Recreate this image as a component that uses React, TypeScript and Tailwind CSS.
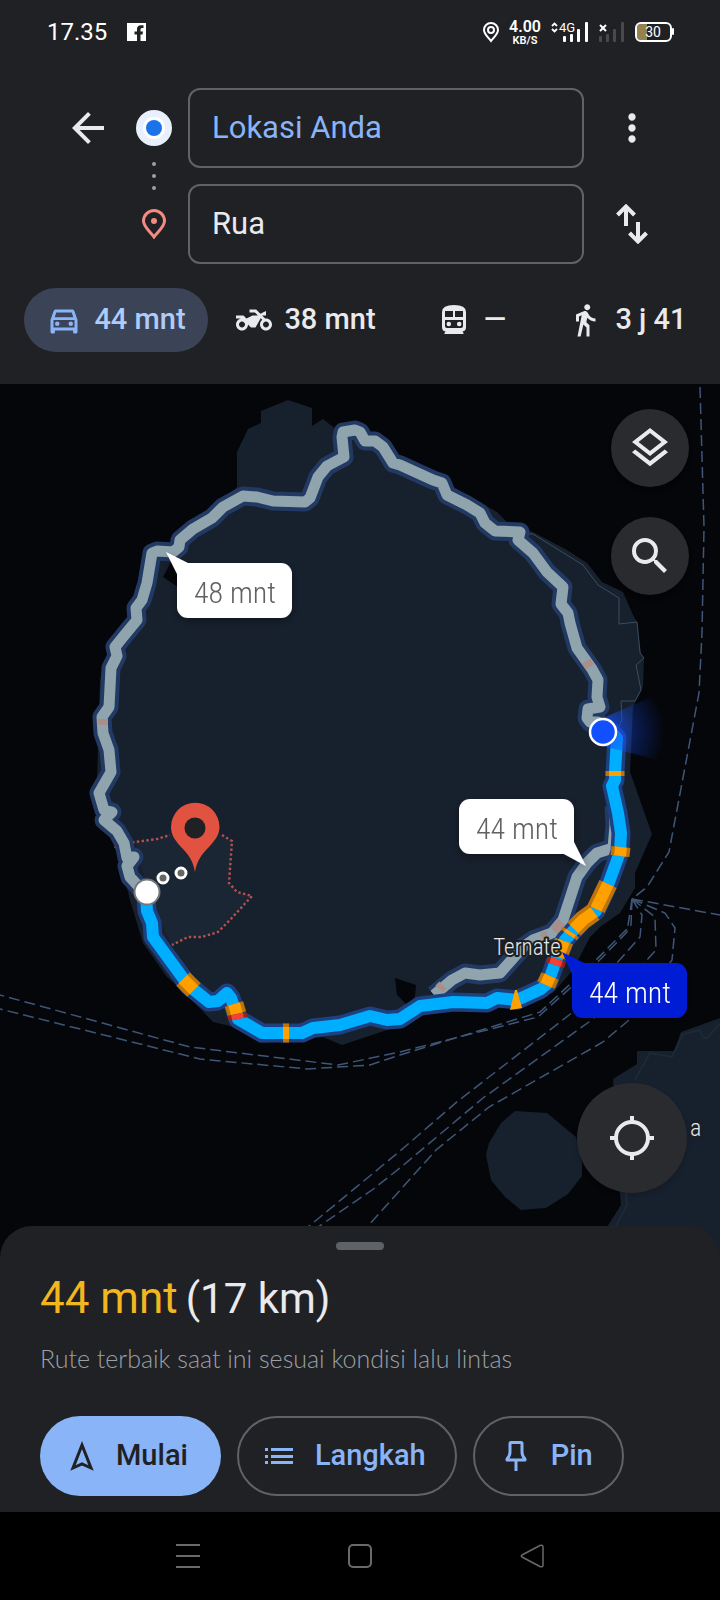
import type { ReactNode } from 'react';
import {
  MdArrowBack,
  MdDirectionsWalk,
  MdMoreVert,
  MdOutlineDirectionsCar,
  MdOutlineLayers,
  MdSearch,
  MdTwoWheeler,
} from 'react-icons/md';

const MAIN_ROUTE =
  'M610 731 L617 738 L615 772 L615 780 L612 786 L618 813 L621 833 L620 852 L608 885 L596 911 L583 920 L565 940 L555 963 L548 983 L541 989 L517 1000 L497 998 L487 1003 L453 1002 L420 1006 L400 1019 L387 1020 L370 1016 L340 1025 L313 1028 L302 1033 L262 1033 L238 1019 L231 998 L227 993 L218 1001 L209 1002 L188 985 L153 937 L152 923 L147 911 L146 896';

const NORTH_ROUTE =
  'M598 722 L590 722 L587 718 L588 709 L600 707 L597 697 L598 680 L592 669 L577 648 L570 623 L568 613 L561 604 L563 587 L547 572 L533 553 L518 540 L520 532 L495 531 L485 523 L480 513 L467 505 L447 495 L442 483 L433 480 L400 465 L393 463 L383 447 L375 441 L365 441 L360 432 L355 430 L343 432 L342 437 L344 457 L327 466 L318 477 L310 498 L305 502 L273 501 L257 497 L243 496 L223 507 L212 518 L193 529 L180 540 L179 547 L173 552 L157 551 L152 553 L147 583 L142 600 L136 608 L137 620 L123 637 L115 647 L117 656 L111 668 L109 707 L102 717 L103 733 L109 750 L111 772 L99 793 L104 810 L112 812 L104 820 L117 831 L124 843 L127 858 L134 857 L127 866 L130 877 L140 888';

const INNER_ROUTE =
  'M614 806 L615 825 L613 848 L597 853 L587 863 L577 877 L563 920 L552 933 L533 940 L523 947 L500 973 L480 975 L465 973 L452 980 L434 995';

const FERRIES = [
  'M700 387 L704 527 L702 633 L699 693 L669 852 L647 887 L632 899',
  'M632 899 L720 915',
  'M632 899 L665 913 L675 928 L672 960 L629 1020 L603 1042 L489 1107 L436 1150 L368 1226',
  'M632 899 L655 917 L656 950 L593 1019 L483 1098 L400 1168 L372 1190 L318 1227',
  'M632 899 L642 915 L640 937 L573 1012 L458 1101 L400 1151 L308 1227',
  'M632 899 L631 925 L593 963 L540 1012 L400 1055 L370 1065 L307 1069 L200 1059 L0 1009',
  'M632 899 L627 932 L588 972 L538 1017 L400 1052 L338 1065 L190 1047 L0 995',
];

// stretches of slow traffic, drawn over the main route
const SLOW = [
  'M615 771 L615 776',
  'M621 847 L620 856',
  'M608 884 L596 909',
  'M594 912 L583 920 L574 929',
  'M571 932 L569 935',
  'M564 941 L558 957',
  'M550 976 L546 985',
  'M183 979 L194 990',
  'M234 1004 L237 1014',
  'M283 1033 L289 1033',
];

const JAMS = ['M557 959 L555 965', 'M237 1014 L238 1019'];

const FADED_TRAFFIC = [
  'M586 661 L590 667',
  'M103 719 L103 725',
  'M562 922 L554 931',
  'M548 935 L542 938',
  'M443 985 L439 989',
];

function Traffic({ d, edge, fill }: { d: string; edge: string; fill: string }) {
  return (
    <g fill="none" strokeLinejoin="round">
      <path d={d} stroke={edge} strokeWidth="19" />
      <path d={d} stroke={fill} strokeWidth="12" />
    </g>
  );
}

interface BubbleProps {
  x: number;
  y: number;
  tail: string;
  label: string;
  bg: string;
  color: string;
}

function Bubble({ x, y, tail, label, bg, color }: BubbleProps) {
  return (
    <g filter="url(#bubble-shadow)">
      <path d={tail} fill={bg} />
      <rect x={x} y={y} width="115" height="55" rx="11" fill={bg} />
      <text x={x + 58} y={y + 40} textAnchor="middle" fontSize="30" fill={color}>
        {label}
      </text>
    </g>
  );
}

function RouteMap() {
  return (
    <svg
      viewBox="0 384 720 874"
      role="img"
      aria-label="Peta rute"
      className="block w-full bg-[#05060a] font-['Liberation_Sans_Narrow','Roboto_Condensed','Roboto',sans-serif] font-light"
    >
      <defs>
        <filter id="bubble-shadow" x="-20%" y="-20%" width="140%" height="150%">
          <feDropShadow dx="0" dy="3" stdDeviation="4" floodColor="#000" floodOpacity="0.35" />
        </filter>
        <radialGradient id="beam" gradientUnits="userSpaceOnUse" cx="603" cy="732" r="62">
          <stop offset="0" stopColor="#1250ff" stopOpacity="0.9" />
          <stop offset="0.5" stopColor="#1250ff" stopOpacity="0.3" />
          <stop offset="1" stopColor="#1250ff" stopOpacity="0" />
        </radialGradient>
      </defs>

      {/* islands */}
      <g fill="#17202d">
        <path d="M261 411 L288 400 L312 408 L312 426 L323 419 L337 430 L400 455 L467 495 L497 512 L507 522 L533 532 L567 550 L587 563 L602 582 L623 592 L633 615 L637 622 L641 653 L644 658 L643 687 L633 707 L630 772 L652 834 L635 873 L635 888 L620 913 L600 927 L590 937 L573 970 L553 993 L500 1006 L423 1013 L387 1030 L342 1045 L323 1037 L260 1043 L230 1026 L213 1022 L187 995 L167 977 L143 943 L130 900 L120 860 L110 837 L95 813 L97 780 L100 680 L105 660 L130 613 L147 567 L170 545 L237 487 L237 452 L248 429 L261 423 Z" />
        <path d="M515 1111 L547 1113 L576 1137 L582 1163 L582 1176 L568 1194 L546 1208 L521 1210 L505 1197 L491 1180 L486 1155 L489 1143 L501 1123 Z" />
        <path d="M720 1018 L681 1032 L674 1051 L637 1051 L637 1064 L613 1079 L620 1193 L621 1205 L607 1227 L607 1258 L720 1258 Z" />
      </g>
      <path d="M172 560 L163 577 L178 587 L192 570 Z" fill="#05060a" />
      <path d="M395 978 L397 995 L408 1006 L415 996 L416 985 Z" fill="#05060a" />
      <g fill="none" strokeWidth="1">
        <path
          d="M528 534 L533 534 L583 565 L598 585 L619 598 L619 624 L637 622 L640 653 L644 658 L636 665 L641 690 L635 701 L621 701 L622 720 L618 728"
          stroke="#3a4c60"
        />
        <path
          d="M720 1024 L707 1038 L703 1038 L700 1030 L683 1034 L672 1057 L650 1053 L635 1080 M626 1190 L627 1205 L616 1226"
          stroke="#1d2937"
          strokeWidth="2"
        />
      </g>

      <g fill="none" stroke="#3f5678" strokeWidth="1.5" strokeDasharray="11 5">
        {FERRIES.map(d => (
          <path key={d} d={d} />
        ))}
      </g>

      {/* Rua boundary */}
      <path
        d="M135 842 L157 839 L170 835 L195 828 L222 835 L232 841 L229 883 L237 892 L252 896 L230 920 L218 932 L202 937 L188 937 L172 945 L150 900 Z"
        fill="#1a2634"
      />
      <path
        d="M115 848 L118 844 L135 842 L157 839 L170 835 M222 835 L232 841 L229 883 L237 892 L252 896 L230 920 L218 932 L202 937 L188 937 L172 945"
        fill="none"
        stroke="#b4524f"
        strokeWidth="2.4"
        strokeDasharray="2.4 2.4"
      />

      <g fill="none" strokeLinejoin="round">
        <path d={INNER_ROUTE} stroke="#223a63" strokeWidth="19" />
        <path d={NORTH_ROUTE} stroke="#223a63" strokeWidth="19" strokeLinecap="round" />
        <path d={INNER_ROUTE} stroke="#90a4ae" strokeWidth="11" />
        <path d={NORTH_ROUTE} stroke="#90a4ae" strokeWidth="11" strokeLinecap="round" />
        {FADED_TRAFFIC.map(d => (
          <path key={d} d={d} stroke="#a98f8a" strokeWidth="10" />
        ))}
        <path d={MAIN_ROUTE} stroke="#1d4180" strokeWidth="19" />
        <path d={MAIN_ROUTE} stroke="#00aeff" strokeWidth="12" />
      </g>
      {SLOW.map(d => (
        <Traffic key={d} d={d} edge="#bd7408" fill="#ff9f00" />
      ))}
      {JAMS.map(d => (
        <Traffic key={d} d={d} edge="#a32019" fill="#f44336" />
      ))}
      <path d="M515 990 L517 990 L522 1008 L510 1010 Z" fill="#ff9f00" />

      <text
        x="527"
        y="955"
        textAnchor="middle"
        fontSize="23"
        fill="#e3e6ea"
        stroke="#1c1e22"
        strokeWidth="4"
        strokeLinejoin="round"
        paintOrder="stroke"
      >
        Ternate
      </text>
      <text x="690" y="1136" fontSize="24" fill="#e3e6ea" stroke="#1c1e22" strokeWidth="4" paintOrder="stroke">
        a
      </text>

      {/* destination */}
      <g fill="#666" stroke="#fff" strokeWidth="3">
        <circle cx="181" cy="873" r="5" />
        <circle cx="163" cy="878" r="5" />
      </g>
      <circle cx="147" cy="892" r="12.5" fill="#fff" stroke="#73777b" strokeWidth="2" />
      <path
        d="M195 872 C193 860 188 854 181 847 C175 840 171 835 171 827 A24 24 0 0 1 219.500 827 C219.500 835 215 840 209 847 C202 854 197 860 195 872 Z"
        fill="#e25241"
      />
      <circle cx="195" cy="828" r="10.500" fill="#202124" />

      {/* current position */}
      <path d="M603 732 L603 718 L656 695 L668 732 L662 761 L603 746 Z" fill="url(#beam)" />
      <circle cx="603" cy="732" r="13" fill="#1250ff" stroke="#fff" strokeWidth="2.500" />

      <Bubble x={177} y={563} tail="M166 552 L190 564 L190 580 L178 576 Z" label="48 mnt" bg="#fff" color="#5f6264" />
      <Bubble x={459} y={799} tail="M586 866 L562 853 L562 840 L574 842 Z" label="44 mnt" bg="#fff" color="#5f6264" />
      <Bubble x={572} y={963} tail="M562 952 L586 964 L586 980 L573 976 Z" label="44 mnt" bg="#051dd4" color="#fff" />
    </svg>
  );
}

function SignalBars({ className }: { className: string }) {
  return (
    <g className={className}>
      <rect x="12" y="14" width="3" height="6" rx="1" />
      <rect x="19" y="12" width="3" height="8" rx="1" />
      <rect x="26" y="7" width="3" height="13" rx="1" />
      <rect x="34" y="0" width="3" height="20" rx="1" />
    </g>
  );
}

function StatusBar() {
  return (
    <div className="flex h-16 items-center justify-between pr-[46px] pl-[47px] text-white">
      <div className="flex items-center gap-5">
        <span className="text-2xl leading-6">17.35</span>
        <svg width="19" height="19" viewBox="0 0 19 19" aria-label="Facebook">
          <path
            fill="#fff"
            fillRule="evenodd"
            d="M0 0 H19 V18 H13.500 V11.500 H15.500 L16 8.500 H13.500 V6.500 Q13.500 5 15 5 H16.500 V2.200 H14 Q10 2.200 10 6 V8.500 H7.500 V11.500 H10 V18 H0 Z"
          />
        </svg>
      </div>
      <div className="flex items-center gap-[10px]">
        <svg width="16" height="21" viewBox="0 0 16 21" fill="none" stroke="#fff" strokeWidth="2">
          <path d="M8 19 C5 15 1 12 1 8 A7 7 0 0 1 15 8 C15 12 11 15 8 19 Z" />
          <circle cx="8" cy="8" r="3" />
        </svg>
        <div className="flex flex-col items-center font-semibold">
          <span className="text-base leading-4">4.00</span>
          <span className="text-[11px] leading-[11px]">KB/S</span>
        </div>
        <svg width="38" height="20" viewBox="0 0 38 20" className="overflow-visible">
          <path d="M1 4 L3.500 1.500 L6 4 M1 7 L3.500 9.500 L6 7" stroke="#fff" strokeWidth="1.800" fill="none" />
          <text x="8" y="10" fontSize="13" fill="#fff">
            4G
          </text>
          <SignalBars className="fill-white" />
        </svg>
        <svg width="26" height="20" viewBox="12 0 26 20">
          <path d="M13 3 L19 9 M19 3 L13 9" stroke="#fff" strokeWidth="2" />
          <SignalBars className="fill-[#48494c]" />
        </svg>
        <svg width="39" height="20" viewBox="0 0 39 20">
          <path d="M6 2 H12 V18 H6 Q2 18 2 14 V6 Q2 2 6 2 Z" fill="#94834f" />
          <rect x="1" y="1" width="35" height="18" rx="5" fill="none" stroke="#fff" strokeWidth="2" />
          <rect x="37" y="6" width="2" height="7" rx="1" fill="#fff" />
          <text x="18" y="15" fontSize="14" textAnchor="middle" fill="#fff">
            30
          </text>
        </svg>
      </div>
    </div>
  );
}

function RouteForm() {
  return (
    <div className="flex pt-6 pl-14">
      <div className="flex h-20 w-16 items-center justify-center">
        <button type="button" aria-label="Kembali" className="text-[#e8eaed]">
          <MdArrowBack size={48} />
        </button>
      </div>
      <div className="flex w-[68px] flex-col items-center pt-[22px]">
        <svg width="36" height="36" viewBox="0 0 36 36">
          <circle cx="18" cy="18" r="18" fill="#e8f0fe" />
          <circle cx="18" cy="18" r="11" fill="#fff" />
          <circle cx="18" cy="18" r="8" fill="#1a73e8" />
        </svg>
        <svg width="4" height="28" viewBox="0 0 4 28" fill="#9aa0a6" className="mt-4 mb-[19px]">
          <circle cx="2" cy="2" r="2" />
          <circle cx="2" cy="14" r="2" />
          <circle cx="2" cy="26" r="2" />
        </svg>
        <svg width="24" height="30" viewBox="0 0 24 30">
          <path
            d="M12 28 C8 22 1.500 18 1.500 12 A10.500 10.500 0 0 1 22.500 12 C22.500 18 16 22 12 28 Z"
            fill="none"
            stroke="#f28b82"
            strokeWidth="3"
          />
          <circle cx="12" cy="12" r="3" fill="#f28b82" />
        </svg>
      </div>
      <div className="flex min-w-0 flex-1 flex-col gap-4 text-[31px]">
        <input
          aria-label="Titik awal"
          defaultValue="Lokasi Anda"
          className="h-20 w-full rounded-xl border-2 border-[#5f6368] bg-transparent px-[22px] pb-0.5 text-[#8ab4f8] outline-none"
        />
        <input
          aria-label="Tujuan"
          defaultValue="Rua"
          className="h-20 w-full rounded-xl border-2 border-[#5f6368] bg-transparent px-[22px] pb-0.5 text-[#e8eaed] outline-none"
        />
      </div>
      <div className="mr-10 flex w-24 flex-col gap-4 text-[#e8eaed]">
        <button type="button" aria-label="Opsi lainnya" className="flex h-20 items-center justify-center">
          <MdMoreVert size={44} />
        </button>
        <button type="button" aria-label="Tukar" className="flex h-20 items-center justify-center">
          <svg width="32" height="40" viewBox="0 0 32 40" fill="none" stroke="currentColor" strokeWidth="4">
            <path d="M10 22 V4 M1.500 11 L10 2.500 L18.500 11" />
            <path d="M22 18 V36 M13.500 29 L22 37.500 L30.500 29" />
          </svg>
        </button>
      </div>
    </div>
  );
}

function TrainIcon() {
  return (
    <svg width="36" height="36" viewBox="0 0 36 36" fill="currentColor">
      <path
        fillRule="evenodd"
        d="M6 10 Q6 3 18 3 Q30 3 30 10 V25 Q30 29 26.500 29.500 L27.500 31 V32 H8.500 V31 L9.500 29.500 Q6 29 6 25 Z M9 9 V15 H17 V9 Z M19 9 V15 H27 V9 Z M9 18 V24 Q9 26 11 26 H25 Q27 26 27 24 V18 Z"
      />
      <circle cx="12.800" cy="22" r="2.300" />
      <circle cx="23.200" cy="22" r="2.300" />
    </svg>
  );
}

function TravelModes() {
  return (
    <div className="flex gap-1 overflow-hidden px-6 pt-6 pb-8 text-[29px] font-medium whitespace-nowrap text-[#e8eaed]">
      <button
        type="button"
        className="flex h-16 w-[184px] shrink-0 items-center justify-center gap-3 rounded-full bg-[#3b4457] text-[#aecbfa]"
      >
        <MdOutlineDirectionsCar size={36} className="text-[#8ab4f8]" />
        44 mnt
      </button>
      <button type="button" className="flex h-16 w-[188px] shrink-0 items-center justify-center gap-3">
        <MdTwoWheeler size={36} />
        38 mnt
      </button>
      <button type="button" className="flex h-16 w-[134px] shrink-0 items-center justify-center gap-3">
        <TrainIcon />
        <span>—</span>
      </button>
      <button type="button" className="flex h-16 w-[170px] shrink-0 items-center justify-center gap-3">
        <MdDirectionsWalk size={36} />
        3 j 41
      </button>
    </div>
  );
}

function MapButton({ label, children }: { label: string; children: ReactNode }) {
  return (
    <button
      type="button"
      aria-label={label}
      className="flex size-[78px] items-center justify-center rounded-full bg-[#2a2b2e] shadow-md"
    >
      {children}
    </button>
  );
}

function ActionButton({ label, primary, icon }: { label: string; primary?: boolean; icon: ReactNode }) {
  return (
    <button
      type="button"
      className={`flex h-20 items-center gap-[18px] rounded-full pl-[26px] text-[29px] font-medium ${
        primary ? 'bg-[#8ab4f8] pr-[33px] text-[#202124]' : 'border-2 border-[#5f6368] pr-[29px] text-[#8ab4f8]'
      }`}
    >
      {icon}
      {label}
    </button>
  );
}

function BottomSheet() {
  return (
    <section className="relative -mt-8 rounded-t-[32px] bg-[#202124] px-10 pt-4 pb-4">
      <div className="mx-auto h-2 w-12 rounded-full bg-[#5f6368]" />
      <h1 className="mt-5 flex h-14 items-baseline gap-2 text-[42px] leading-[56px] text-[#e8eaed]">
        <span className="text-[44px] text-[#f2b61f]">44 mnt</span>
        <span>(17 km)</span>
      </h1>
      <p className="mt-4 font-['Lato','Roboto',sans-serif] text-[25px] leading-8 font-light text-[#9aa0a6]">
        Rute terbaik saat ini sesuai kondisi lalu lintas
      </p>
      <div className="mt-[42px] flex gap-4">
        <ActionButton
          primary
          label="Mulai"
          icon={
            <svg width="32" height="32" viewBox="0 0 32 32" fill="none" stroke="currentColor" strokeWidth="3">
              <path d="M16 5 L25 28 L16 24 L7 28 Z" />
            </svg>
          }
        />
        <ActionButton
          label="Langkah"
          icon={
            <svg width="32" height="32" viewBox="0 0 32 32" fill="currentColor">
              <path d="M0 8 H3 V11 H0 Z M0 15 H3 V18 H0 Z M0 21 H3 V24 H0 Z M6 8 H28 V11 H6 Z M6 15 H28 V18 H6 Z M6 21 H28 V24 H6 Z" />
            </svg>
          }
        />
        <ActionButton
          label="Pin"
          icon={
            <svg width="32" height="32" viewBox="0 0 32 32" fill="none" stroke="currentColor" strokeWidth="3">
              <path
                d="M10 2.500 H20 Q21 2.500 21 3.500 V12 Q21 16 24 19 V20 H6 V19 Q9 16 9 12 V3.500 Q9 2.500 10 2.500 Z M15 20 V31"
                strokeLinejoin="round"
              />
            </svg>
          }
        />
      </div>
    </section>
  );
}

export default function App() {
  return (
    <div className="w-full bg-black font-['Roboto',sans-serif]">
      <header className="bg-[#202124]">
        <StatusBar />
        <RouteForm />
        <TravelModes />
      </header>

      <main className="relative">
        <RouteMap />
        <div className="absolute top-[25px] right-[31px] flex flex-col gap-[30px] text-[#e8eaed]">
          <MapButton label="Lapisan">
            <MdOutlineLayers size={48} />
          </MapButton>
          <MapButton label="Telusuri">
            <MdSearch size={48} />
          </MapButton>
        </div>
        <button
          type="button"
          aria-label="Lokasi saya"
          className="absolute right-[33px] bottom-[65px] flex size-[110px] items-center justify-center rounded-full bg-[#2a2b2e] text-[#e8eaed] shadow-md"
        >
          <svg width="44" height="44" viewBox="0 0 44 44" fill="none" stroke="currentColor" strokeWidth="4">
            <circle cx="22" cy="22" r="16" />
            <path d="M22 0 V6 M22 38 V44 M0 22 H6 M38 22 H44" />
          </svg>
        </button>
      </main>

      <BottomSheet />

      <nav className="flex h-[88px] items-center justify-center gap-37 bg-black text-[#6a6a6a]">
        <button type="button" aria-label="Aplikasi terbaru">
          <svg width="24" height="24" viewBox="0 0 24 24" stroke="currentColor" strokeWidth="2">
            <path d="M0 1 H24 M0 12 H24 M0 23 H24" />
          </svg>
        </button>
        <button type="button" aria-label="Beranda">
          <svg width="24" height="24" viewBox="0 0 24 24" fill="none" stroke="currentColor" strokeWidth="2">
            <rect x="1" y="1" width="22" height="22" rx="4" />
          </svg>
        </button>
        <button type="button" aria-label="Kembali ke layar sebelumnya">
          <svg width="24" height="24" viewBox="0 0 24 24" fill="none" stroke="currentColor" strokeWidth="1.500">
            <path d="M2 11 L20 1.500 Q23 0.500 23 3 V21 Q23 23.500 20 22.500 L2 13 Q0.500 12 2 11 Z" />
          </svg>
        </button>
      </nav>
    </div>
  );
}
